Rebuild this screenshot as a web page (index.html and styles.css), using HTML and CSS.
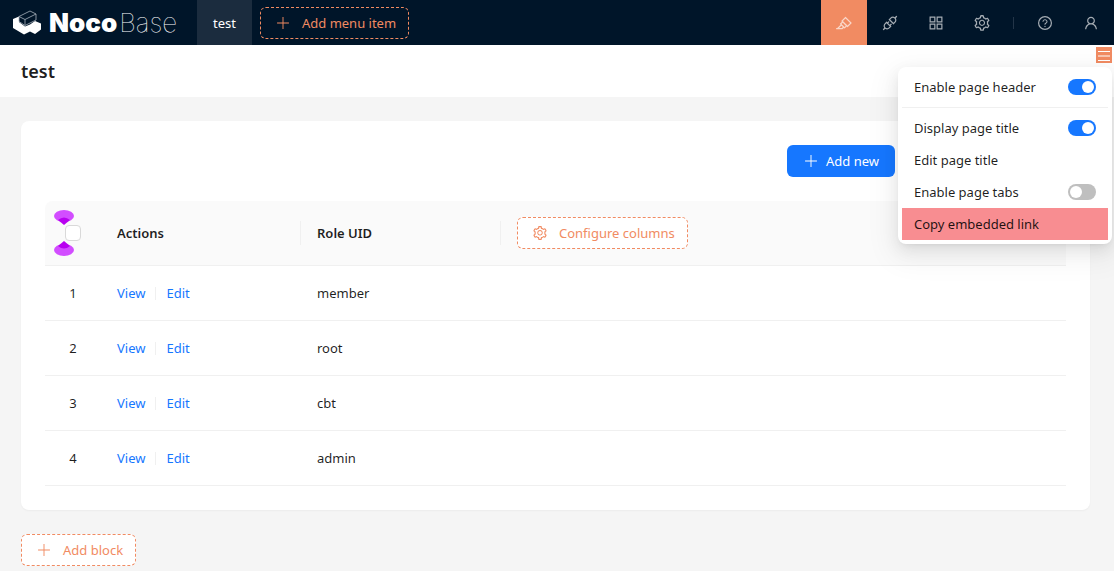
FILE: index.html
```html
<!DOCTYPE html>
<html lang="en">
<head>
<meta charset="utf-8">
<title>test - NocoBase</title>
<link rel="stylesheet" href="styles.css">
</head>
<body>
<svg class="sprite" aria-hidden="true">
  <symbol id="plus" viewBox="0 0 1024 1024"><path d="M482 132h60v760h-60zM132 482h760v60H132z"/></symbol>
  <symbol id="setting" viewBox="0 0 1024 1024"><path d="M924.8 625.7l-65.5-56c3.1-19 4.7-38.4 4.7-57.8s-1.6-38.8-4.7-57.8l65.5-56a32.03 32.03 0 009.3-35.2l-.9-2.6a443.74 443.74 0 00-79.7-137.9l-1.8-2.1a32.12 32.12 0 00-35.1-9.5l-81.3 28.9c-30-24.6-63.5-44-99.7-57.6l-15.7-85a32.05 32.05 0 00-25.8-25.7l-2.7-.5c-52.1-9.4-106.9-9.4-159 0l-2.7.5a32.05 32.05 0 00-25.8 25.7l-15.8 85.4a351.86 351.86 0 00-99 57.4l-81.9-29.1a32 32 0 00-35.1 9.5l-1.8 2.1a446.02 446.02 0 00-79.7 137.9l-.9 2.6c-4.5 12.5-.8 26.5 9.3 35.2l66.3 56.6c-3.1 18.8-4.6 38-4.6 57.1 0 19.2 1.5 38.4 4.6 57.1L99 625.5a32.03 32.03 0 00-9.3 35.2l.9 2.6c18.1 50.4 44.9 96.9 79.7 137.9l1.8 2.1a32.12 32.12 0 0035.1 9.5l81.9-29.1c29.8 24.5 63.1 43.9 99 57.4l15.8 85.4a32.05 32.05 0 0025.8 25.7l2.7.5a449.4 449.4 0 00159 0l2.7-.5a32.05 32.05 0 0025.8-25.7l15.7-85a350 350 0 0099.7-57.6l81.3 28.9a32 32 0 0035.1-9.5l1.8-2.1c34.8-41.1 61.6-87.5 79.7-137.9l.9-2.6c4.5-12.3.8-26.3-9.3-35zM788.3 465.9c2.5 15.1 3.8 30.6 3.8 46.1s-1.3 31-3.8 46.1l-6.6 40.1 74.7 63.9a370.03 370.03 0 01-42.6 73.6L721 702.8l-31.4 25.8c-23.9 19.6-50.5 35-79.3 45.8l-38.1 14.3-17.9 97a377.5 377.5 0 01-85 0l-17.9-97.2-37.8-14.5c-28.5-10.8-55-26.2-78.7-45.7l-31.4-25.9-93.4 33.2c-17-22.9-31.2-47.6-42.6-73.6l75.5-64.5-6.5-40c-2.4-14.9-3.7-30.3-3.7-45.5 0-15.3 1.2-30.6 3.7-45.5l6.5-40-75.5-64.5c11.3-26.1 25.6-50.7 42.6-73.6l93.4 33.2 31.4-25.9c23.7-19.5 50.2-34.9 78.7-45.7l37.9-14.3 17.9-97.2c28.1-3.2 56.8-3.2 85 0l17.9 97 38.1 14.3c28.7 10.8 55.4 26.2 79.3 45.8l31.4 25.8 92.8-32.9c17 22.9 31.2 47.6 42.6 73.6L781.8 426l6.5 39.9zM512 326c-97.2 0-176 78.8-176 176s78.8 176 176 176 176-78.8 176-176-78.8-176-176-176zm79.2 255.2A111.6 111.6 0 01512 614c-29.9 0-58-11.7-79.2-32.8A111.6 111.6 0 01400 502c0-29.9 11.7-58 32.8-79.2C454 401.6 482.1 390 512 390c29.9 0 58 11.6 79.2 32.8A111.6 111.6 0 01624 502c0 29.9-11.7 58-32.8 79.2z"/></symbol>
</svg>

<header class="topbar">
  <a class="brand" href="#" aria-label="NocoBase">
    <svg class="brand-mark" viewBox="0 0 28 25" aria-hidden="true">
      <path fill="#fff" d="M0 9 6 6.500V12L12 16.500 17 14.500 22 11 28 13.500V19.500L22 24 17 21.500 11 24.500 0 18Z"/>
      <path fill="#001529" d="m6 6.500 11-5.500 6 3v6l-11 5.500-6-4Z"/>
      <path fill="none" stroke="#a9b3bd" stroke-width=".8" stroke-linejoin="round" d="M6 11.500V6.500L17 1l6 3v6l-11 5.500-6-4M6 6.500 12 9.500 23 4M12 9.500v6"/>
    </svg>
    <span class="brand-name"><b>Noco</b><span class="thin">Base</span></span>
  </a>
  <nav class="menu"><a class="menu-item" href="#">test</a></nav>
  <button class="dashed on-dark" type="button"><svg class="icon"><use href="#plus"/></svg>Add menu item</button>
  <div class="tools">
    <button class="tool active" type="button" aria-label="UI editor"><svg class="icon large" viewBox="0 0 1024 1024"><path d="M957.6 507.4L603.2 158.2a7.9 7.9 0 00-11.2 0L353.3 393.4a8.03 8.03 0 00-.1 11.3l.1.1 40 39.4-117.2 115.3a8.03 8.03 0 00-.1 11.3l.1.1 39.5 38.9-189.1 187H72.1c-4.4 0-8.1 3.6-8.1 8V860c0 4.4 3.6 8 8 8h344.9c2.1 0 4.1-.8 5.6-2.3l76.1-75.6 40.4 39.8a7.9 7.9 0 0011.2 0l117.1-115.6 40.1 39.5a7.9 7.9 0 0011.2 0l238.7-235.2c3.4-3 3.4-8 .3-11.2zM389.8 796.2H229.6l134.4-133 80.1 78.9-54.3 54.1zm154.8-62.1L373.2 565.2l68.6-67.6 171.4 168.9-68.6 67.6zM713.1 658L450.3 399.1 597.6 254l262.8 259-147.3 145z"/></svg></button>
    <button class="tool" type="button" aria-label="Plugin manager"><svg class="icon large" viewBox="0 0 1024 1024"><path d="M917.7 148.8l-42.4-42.4c-1.6-1.6-3.6-2.3-5.7-2.3s-4.1.8-5.7 2.3l-76.1 76.1a199.27 199.27 0 00-112.1-34.3c-51.2 0-102.4 19.5-141.5 58.6L432.3 308.7a8.03 8.03 0 000 11.3L704 591.7c1.6 1.6 3.6 2.3 5.7 2.3 2 0 4.1-.8 5.7-2.3l101.9-101.9c68.9-69 77-175.7 24.3-253.5l76.1-76.1c3.1-3.2 3.1-8.3 0-11.4zM769.1 441.7l-59.4 59.4-186.8-186.8 59.4-59.4c24.9-24.9 58.1-38.7 93.4-38.7 35.3 0 68.4 13.7 93.4 38.7 24.9 24.9 38.7 58.1 38.7 93.4 0 35.3-13.8 68.4-38.7 93.4zm-190.2 105a8.03 8.03 0 00-11.3 0L501 613.3 410.7 523l66.7-66.7c3.1-3.1 3.1-8.2 0-11.3L441 408.6a8.03 8.03 0 00-11.3 0L363 475.3l-43-43a7.85 7.85 0 00-5.7-2.3c-2 0-4.1.8-5.7 2.3L206.8 534.2c-68.9 69-77 175.7-24.3 253.5l-76.1 76.1a8.03 8.03 0 000 11.3l42.4 42.4c1.6 1.6 3.6 2.3 5.7 2.3s4.1-.8 5.7-2.3l76.1-76.1c33.7 22.9 72.9 34.3 112.1 34.3 51.2 0 102.4-19.5 141.5-58.6l101.9-101.9c3.1-3.1 3.1-8.2 0-11.3l-43-43 66.7-66.7c3.1-3.1 3.1-8.2 0-11.3l-36.6-36.2zM441.7 769.1a131.32 131.32 0 01-93.4 38.7c-35.3 0-68.4-13.7-93.4-38.7a131.32 131.32 0 01-38.7-93.4c0-35.3 13.7-68.4 38.7-93.4l59.4-59.4 186.8 186.8-59.4 59.4z"/></svg></button>
    <button class="tool" type="button" aria-label="Blocks"><svg class="icon large" viewBox="0 0 1024 1024"><path d="M464 144H160c-8.8 0-16 7.2-16 16v304c0 8.8 7.2 16 16 16h304c8.8 0 16-7.2 16-16V160c0-8.8-7.2-16-16-16zm-52 268H212V212h200v200zm452-268H560c-8.8 0-16 7.2-16 16v304c0 8.8 7.2 16 16 16h304c8.8 0 16-7.2 16-16V160c0-8.8-7.2-16-16-16zm-52 268H612V212h200v200zM464 544H160c-8.8 0-16 7.2-16 16v304c0 8.8 7.2 16 16 16h304c8.8 0 16-7.2 16-16V560c0-8.8-7.2-16-16-16zm-52 268H212V612h200v200zm452-268H560c-8.8 0-16 7.2-16 16v304c0 8.8 7.2 16 16 16h304c8.8 0 16-7.2 16-16V560c0-8.8-7.2-16-16-16zm-52 268H612V612h200v200z"/></svg></button>
    <button class="tool" type="button" aria-label="Settings"><svg class="icon large"><use href="#setting"/></svg></button>
    <span class="tool-divider"></span>
    <button class="tool" type="button" aria-label="Help"><svg class="icon" viewBox="0 0 1024 1024"><circle cx="512" cy="512" r="410" fill="none" stroke="currentColor" stroke-width="76"/><path d="M623.6 316.7C593.6 290.4 554 276 512 276s-81.6 14.5-111.6 40.7C369.2 344 352 380.7 352 420v7.6c0 4.4 3.6 8 8 8h48c4.4 0 8-3.6 8-8V420c0-44.1 43.1-80 96-80s96 35.9 96 80c0 31.1-22 59.6-56.1 72.7-21.2 8.1-39.2 22.3-52.1 40.9-13.1 19-19.9 41.8-19.9 64.9V620c0 4.4 3.6 8 8 8h48c4.4 0 8-3.6 8-8v-22.7a48.3 48.3 0 0130.9-44.8c59-22.7 97.1-74.7 97.1-132.5.1-39.3-17.1-76-48.3-103.3zM472 732a40 40 0 1080 0 40 40 0 10-80 0z"/></svg></button>
    <button class="tool" type="button" aria-label="User"><svg class="icon" viewBox="0 0 1024 1024"><path d="M858.5 763.6a374 374 0 00-80.6-119.5 375.63 375.63 0 00-119.5-80.6c-.4-.2-.8-.3-1.2-.5C719.5 518 760 444.7 760 362c0-137-111-248-248-248S264 225 264 362c0 82.7 40.5 156 102.8 201.1-.4.2-.8.3-1.2.5-44.8 18.9-85 46-119.5 80.6a375.63 375.63 0 00-80.6 119.5A371.7 371.7 0 00136 901.8a8 8 0 008 8.2h60c4.4 0 7.9-3.5 8-7.8 2-77.2 33-149.5 87.8-204.3 56.7-56.7 132-87.9 212.2-87.9s155.5 31.2 212.2 87.9C779 752.7 810 825 812 902.2c.1 4.4 3.6 7.8 8 7.8h60a8 8 0 008-8.2c-1-47.8-10.9-94.3-29.5-138.2zM512 534c-45.9 0-89.1-17.9-121.6-50.4S340 407.9 340 362c0-45.9 17.9-89.1 50.4-121.6S466.1 190 512 190s89.1 17.9 121.6 50.4S684 316.1 684 362c0 45.9-17.9 89.1-50.4 121.6S557.9 534 512 534z"/></svg></button>
  </div>
</header>

<section class="page-header">
  <h1>test</h1>
  <button class="designer" type="button" aria-label="Page settings"><svg viewBox="0 0 16 16"><path d="M2 4.5h12M2 9h12M2 13.5h12"/></svg></button>
  <div class="settings">
    <label class="option">Enable page header<input class="switch" type="checkbox" role="switch" checked></label>
    <hr>
    <label class="option">Display page title<input class="switch" type="checkbox" role="switch" checked></label>
    <button class="option" type="button">Edit page title</button>
    <label class="option">Enable page tabs<input class="switch" type="checkbox" role="switch"></label>
    <button class="option marked" type="button">Copy embedded link</button>
  </div>
</section>

<main class="content">
  <section class="card">
    <div class="actions">
      <button class="primary" type="button"><svg class="icon"><use href="#plus"/></svg>Add new</button>
    </div>
    <table class="grid">
      <colgroup><col class="col-select"><col class="col-data"><col class="col-data"><col></colgroup>
      <thead>
        <tr>
          <th class="select">
            <input class="check" type="checkbox" aria-label="Select all">
            <svg class="drag" viewBox="0 0 20 46" aria-hidden="true">
              <g id="cone"><ellipse cx="10" cy="6" rx="10" ry="6" fill="#d24dff"/><path fill="#b800f0" d="M4 10Q10 5 16 10L10 15Z"/></g>
              <use href="#cone" transform="matrix(1 0 0 -1 0 46)"/>
            </svg>
          </th>
          <th>Actions</th>
          <th>Role UID</th>
          <th><button class="dashed" type="button"><svg class="icon"><use href="#setting"/></svg>Configure columns</button></th>
        </tr>
      </thead>
      <tbody>
        <tr><td class="select">1</td><td><span class="links"><a href="#">View</a><i></i><a href="#">Edit</a></span></td><td>member</td><td></td></tr>
        <tr><td class="select">2</td><td><span class="links"><a href="#">View</a><i></i><a href="#">Edit</a></span></td><td>root</td><td></td></tr>
        <tr><td class="select">3</td><td><span class="links"><a href="#">View</a><i></i><a href="#">Edit</a></span></td><td>cbt</td><td></td></tr>
        <tr><td class="select">4</td><td><span class="links"><a href="#">View</a><i></i><a href="#">Edit</a></span></td><td>admin</td><td></td></tr>
      </tbody>
    </table>
  </section>
  <button class="dashed" type="button"><svg class="icon"><use href="#plus"/></svg>Add block</button>
</main>
</body>
</html>
```
FILE: styles.css
```css
* { box-sizing: border-box; }

body {
  margin: 0;
  min-height: 100vh;
  background: #f5f5f5;
  color: rgba(0, 0, 0, 0.88);
  font: 13px/22px "Noto Sans", "Open Sans", sans-serif;
}

button { font: inherit; color: inherit; border: 0; background: none; padding: 0; cursor: pointer; }
a { color: #1677ff; text-decoration: none; }
.sprite { position: absolute; width: 0; height: 0; }
.icon { width: 16px; height: 16px; fill: currentColor; flex: none; }
.icon.large { width: 18px; height: 18px; }

/* Top bar */
.topbar { display: flex; align-items: center; height: 45px; background: #001529; }
.brand { display: flex; align-items: center; gap: 8px; width: 197px; padding-left: 13px; color: #fff; }
.brand-mark { width: 28px; height: 25px; flex: none; }
.brand-name { display: flex; align-items: baseline; gap: 2px; font: 26px/32px Inter, sans-serif; }
.brand-name b { font-weight: 900; }
.thin { font-size: 26px; font-weight: 100; }
.menu { align-self: stretch; display: flex; margin-right: 8px; }
.menu-item { display: flex; align-items: center; padding: 0 16px; background: #1b2c3e; color: #fff; }

.dashed {
  display: inline-flex;
  align-items: center;
  gap: 11px;
  height: 32px;
  padding: 0 12px 0 14px;
  border: 1px dashed #f18b62;
  border-radius: 6px;
  background: #fff;
  color: #f18b62;
  font-weight: 400;
  white-space: nowrap;
}
.on-dark { background: transparent; }

.tools { display: flex; align-items: center; align-self: stretch; margin-left: auto; color: rgba(255, 255, 255, 0.65); }
.tool { display: grid; place-items: center; align-self: stretch; width: 46px; }
.tool.active { background: #f18b62; }
.tool-divider { width: 1px; height: 12px; margin: 0 8px; background: #233548; }

/* Page header */
.page-header { position: relative; display: flex; align-items: center; height: 52px; padding: 0 21px; background: #fff; }
.page-header h1 { margin: 0; font-size: 18px; line-height: 28px; font-weight: 600; }
.designer { position: absolute; top: 2px; right: 2px; width: 16px; height: 16px; background: #f18b62; }
.designer svg { display: block; fill: none; stroke: #fff; }

/* Settings menu */
.settings {
  position: absolute;
  z-index: 2;
  top: 22px;
  right: 2px;
  width: 214px;
  padding: 4px;
  border-radius: 8px;
  background: #fff;
  box-shadow: 0 6px 16px rgba(0, 0, 0, 0.08), 0 3px 6px -4px rgba(0, 0, 0, 0.12), 0 9px 28px 8px rgba(0, 0, 0, 0.05);
}
.option { display: flex; align-items: center; justify-content: space-between; width: 100%; height: 32px; padding: 0 12px; white-space: nowrap; }
.settings hr { height: 1px; margin: 4px 0; border: 0; background: #f0f0f0; }
.marked { background: #f88d91; }

.switch { appearance: none; display: flex; width: 28px; height: 16px; margin: 0; padding: 2px; border-radius: 8px; background: #bfbfbf; }
.switch::before { content: ""; width: 12px; height: 12px; border-radius: 50%; background: #fff; }
.switch:checked { justify-content: flex-end; background: #1677ff; }

/* Content */
.content { padding: 24px 24px 5px 21px; }
.card { margin-bottom: 24px; padding: 24px; border-radius: 8px; background: #fff; box-shadow: 0 1px 2px rgba(0, 0, 0, 0.04); }
.actions { display: flex; justify-content: flex-end; margin-bottom: 24px; padding-right: 171px; }
.primary { display: flex; align-items: center; gap: 7px; height: 32px; padding: 0 16px; border-radius: 6px; background: #1677ff; color: #fff; }

.grid { width: 100%; table-layout: fixed; border-collapse: separate; border-spacing: 0; text-align: left; }
.col-select { width: 56px; }
.col-data { width: 200px; }
.grid th, .grid td { padding: 16px; border-bottom: 1px solid #f0f0f0; }
.grid th { position: relative; background: #fafafa; font-weight: 600; line-height: 0; }
.grid th + th:not(:last-child)::after {
  content: "";
  position: absolute;
  top: 20px;
  right: 0;
  width: 1px;
  height: 24px;
  background: #f0f0f0;
}
.grid th:first-child { border-top-left-radius: 8px; }
.grid th:last-child { border-top-right-radius: 8px; }
.grid .select { padding: 16px 8px; text-align: center; }
.check { appearance: none; width: 16px; height: 16px; margin: 0; border: 1px solid #d9d9d9; border-radius: 4px; background: #fff; }
.drag { position: absolute; top: 9px; left: 9px; width: 20px; height: 46px; }
.links { display: flex; align-items: center; gap: 10px; }
.links i { width: 1px; height: 13px; background: #f0f0f0; }
```
